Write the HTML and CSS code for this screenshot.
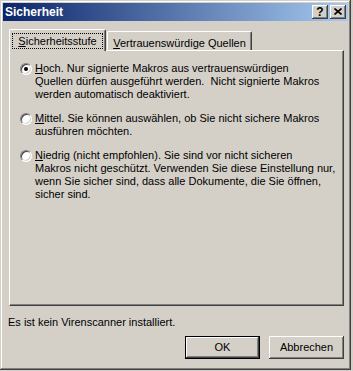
FILE: index.html
```html
<!DOCTYPE html>
<html lang="de">
<head>
    <meta charset="UTF-8">
    <title>Sicherheit</title>
    <link rel="stylesheet" href="styles.css">
</head>
<body>
    <div class="window">
        <div class="titlebar">
            <span class="title">Sicherheit</span>
            <div class="caption-buttons">
                <span class="cap-btn help">?</span>
                <span class="cap-btn close">
                    <svg width="8" height="7" viewBox="0 0 8 7">
                        <path d="M0.5 0.5 L7.5 6.5 M7.5 0.5 L0.5 6.5" stroke="#000" stroke-width="1.6" fill="none"/>
                    </svg>
                </span>
            </div>
        </div>

        <div class="content">
            <div class="tabs">
                <div class="tab active"><span class="focus"><u>S</u>icherheitsstufe</span></div>
                <div class="tab"><u>V</u>ertrauenswürdige Quellen</div>
            </div>

            <div class="panel">
                <div class="option">
                    <span class="radio checked"></span>
                    <div class="label"><u>H</u>och. Nur signierte Makros aus vertrauenswürdigen<br>Quellen dürfen ausgeführt werden.&nbsp; Nicht signierte Makros<br>werden automatisch deaktiviert.</div>
                </div>
                <div class="option">
                    <span class="radio"></span>
                    <div class="label"><u>M</u>ittel. Sie können auswählen, ob Sie nicht sichere Makros<br>ausführen möchten.</div>
                </div>
                <div class="option">
                    <span class="radio"></span>
                    <div class="label"><u>N</u>iedrig (nicht empfohlen). Sie sind vor nicht sicheren<br>Makros nicht geschützt. Verwenden Sie diese Einstellung nur,<br>wenn Sie sicher sind, dass alle Dokumente, die Sie öffnen,<br>sicher sind.</div>
                </div>
            </div>

            <div class="status">Es ist kein Virenscanner installiert.</div>

            <div class="buttons">
                <span class="btn default">OK</span>
                <span class="btn">Abbrechen</span>
            </div>
        </div>
    </div>
</body>
</html>
```

FILE: styles.css
```css
body {
    margin: 0;
    background-color: #d4d0c8;
    font-family: "Liberation Sans", Arial, sans-serif;
    font-size: 11px;
    line-height: 13px;
    color: #000;
}
u {
    text-underline-offset: 1px;
}
.window {
    width: 351px;
    height: 370px;
    box-sizing: border-box;
    padding: 3px;
    background-color: #d4d0c8;
    box-shadow: inset -1px -1px #404040, inset 1px 1px #d4d0c8,
                inset -2px -2px #808080, inset 2px 2px #fff;
}
.titlebar {
    height: 18px;
    display: flex;
    align-items: center;
    justify-content: space-between;
    background: linear-gradient(to right, #0a246a, #a6caf0);
}
.title {
    color: #fff;
    font-weight: bold;
    font-size: 12px;
    padding-left: 2px;
}
.caption-buttons {
    display: flex;
    gap: 2px;
    padding-right: 2px;
}
.cap-btn {
    width: 16px;
    height: 14px;
    box-sizing: border-box;
    display: flex;
    align-items: center;
    justify-content: center;
    background-color: #d4d0c8;
    box-shadow: inset -1px -1px #404040, inset 1px 1px #fff,
                inset -2px -2px #808080, inset 2px 2px #d4d0c8;
}
.help {
    font-weight: bold;
    font-size: 12px;
    line-height: 12px;
    padding-bottom: 1px;
}
.close svg {
    display: block;
    margin-top: -1px;
}
.content {
    padding: 8px 0 0 6px;
}
.tabs {
    display: flex;
    align-items: flex-end;
    height: 21px;
}
.tab {
    position: relative;
    width: 145px;
    height: 19px;
    box-sizing: border-box;
    padding-top: 5px;
    margin-left: 1px;
    text-align: center;
    border-top: 1px solid #fff;
    border-left: 1px solid #fff;
    border-right: 1px solid #404040;
    border-radius: 2px 2px 0 0;
    box-shadow: inset -1px 0 #808080;
}
.tab.active {
    z-index: 1;
    width: 97px;
    height: 22px;
    margin-left: 0;
    margin-bottom: -1px;
    padding-top: 3px;
    background-color: #d4d0c8;
}
.focus {
    display: inline-block;
    padding: 1px 5px 0;
    border: 1px dotted #000;
}
.panel {
    width: 335px;
    height: 256px;
    box-sizing: border-box;
    padding: 11px 0 0 10px;
    border-top: 1px solid #fff;
    border-left: 1px solid #fff;
    border-right: 1px solid #404040;
    border-bottom: 1px solid #404040;
    box-shadow: inset -1px -1px #808080;
}
.option {
    display: flex;
    align-items: flex-start;
    gap: 3px;
    margin-bottom: 11px;
    white-space: nowrap;
}
.radio {
    position: relative;
    flex: none;
    width: 12px;
    height: 12px;
    margin-top: 1px;
    box-sizing: border-box;
    border-radius: 50%;
    border: 1px solid;
    border-color: #808080 #fff #fff #808080;
    background-color: #fff;
    box-shadow: inset 1px 1px #404040, inset -1px -1px #d4d0c8;
}
.radio.checked::after {
    content: "";
    position: absolute;
    left: 3px;
    top: 3px;
    width: 4px;
    height: 4px;
    border-radius: 50%;
    background-color: #000;
}
.status {
    margin: 10px 0 0 -1px;
}
.buttons {
    width: 335px;
    display: flex;
    justify-content: flex-end;
    gap: 9px;
    margin-top: 7px;
}
.btn {
    width: 75px;
    height: 23px;
    box-sizing: border-box;
    display: flex;
    align-items: center;
    justify-content: center;
    box-shadow: inset -1px -1px #404040, inset 1px 1px #fff,
                inset -2px -2px #808080, inset 2px 2px #d4d0c8;
}
.btn.default {
    border: 1px solid #000;
    box-shadow: inset -1px -1px #404040, inset 1px 1px #fff,
                inset -2px -2px #808080;
}
```
